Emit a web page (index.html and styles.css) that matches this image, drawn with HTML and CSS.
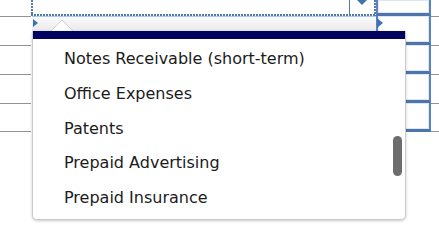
FILE: index.html
```html
<!DOCTYPE html>
<html lang="en">
<head>
    <meta charset="UTF-8">
    <title>Account picker</title>
    <link rel="stylesheet" href="styles.css">
</head>
<body>
    <div class="sheet">
        <div class="cell"></div>
        <div class="cell active">
            <span class="drop-btn">
                <svg width="10" height="5" viewBox="0 0 10 5"><polygon points="0,0 10,0 5,5" fill="#3f73b4"/></svg>
            </span>
        </div>
        <div class="cell sel"></div>
        <div class="cell"></div>

        <div class="cell line"></div>
        <div class="cell"></div>
        <div class="cell sel"></div>
        <div class="cell line"></div>

        <div class="cell line"></div>
        <div class="cell"></div>
        <div class="cell sel"></div>
        <div class="cell line"></div>

        <div class="cell line"></div>
        <div class="cell"></div>
        <div class="cell sel"></div>
        <div class="cell line"></div>

        <div class="cell line last"></div>
        <div class="cell"></div>
        <div class="cell sel"></div>
        <div class="cell line last"></div>
    </div>

    <div class="popup">
        <div class="pop-head">
            <span class="marker"></span>
            <svg class="caret" width="22" height="13" viewBox="0 0 22 13">
                <polyline points="0,13 11,2 22,13" fill="#fdfdfd" stroke="#cfcfcf" stroke-width="1"/>
            </svg>
        </div>
        <div class="list">
            <div class="item current">Notes Receivable (long-term)</div>
            <div class="item">Notes Receivable (short-term)</div>
            <div class="item">Office Expenses</div>
            <div class="item">Patents</div>
            <div class="item">Prepaid Advertising</div>
            <div class="item">Prepaid Insurance</div>
            <span class="thumb"></span>
        </div>
    </div>
    <span class="marker right-marker"></span>
</body>
</html>
```

FILE: styles.css
```css
html, body {
    margin: 0;
    width: 439px;
    height: 245px;
    overflow: hidden;
    background: #fff;
}

body {
    position: relative;
    font-family: "DejaVu Sans", Verdana, sans-serif;
}

.sheet {
    display: grid;
    grid-template-columns: 31px 345px 55px 1fr;
    grid-template-rows: 16px repeat(4, 29px);
}

.cell {
    box-sizing: border-box;
}

.line {
    border-top: 1px solid #929292;
}

.line.last {
    border-bottom: 1px solid #929292;
}

.sel {
    border-left: 2px solid #5d83bf;
    border-right: 2px solid #5d83bf;
    border-bottom: 3px solid #4e73ad;
    box-shadow: inset 0 0 0 1px #dce7f6;
}

.active {
    display: flex;
    justify-content: flex-end;
    padding-right: 2px;
    background:
        repeating-linear-gradient(180deg, #4e7cb2 0 2px, transparent 2px 3px) left top / 2px 100% no-repeat,
        repeating-linear-gradient(90deg, #4e7cb2 0 2px, transparent 2px 3px) left bottom / 100% 2px no-repeat,
        repeating-linear-gradient(180deg, #4e7cb2 0 2px, transparent 2px 3px) right top / 2px 100% no-repeat;
}

.drop-btn {
    display: flex;
    justify-content: center;
    align-items: flex-start;
    width: 24px;
    height: 14px;
    border-left: 1px solid #4f7db3;
}

.popup {
    position: absolute;
    left: 32px;
    top: 16px;
    width: 374px;
}

.pop-head {
    position: relative;
    box-sizing: border-box;
    width: 344px;
    height: 15px;
    border-top: 1px solid #b3cbea;
    background: linear-gradient(#fbfbfb, #e9e9e9);
}

.caret {
    position: absolute;
    left: 19px;
    bottom: 0;
}

.marker {
    position: absolute;
    left: 1px;
    top: 2px;
    width: 0;
    height: 0;
    border-top: 4px solid transparent;
    border-bottom: 4px solid transparent;
    border-left: 5px solid #3d72b8;
}

.right-marker {
    left: 377px;
    top: 18px;
    border-top-width: 5px;
    border-bottom-width: 5px;
    border-left-width: 6px;
}

.list {
    position: relative;
    box-sizing: border-box;
    height: 189px;
    overflow: hidden;
    background: #fff;
    border: 1px solid #cbcbcb;
    border-top: none;
    border-radius: 0 0 5px 5px;
    box-shadow: 0 1px 3px rgba(0, 0, 0, 0.22);
}

.item {
    height: 34.8px;
    line-height: 34.8px;
    padding-left: 31px;
    font-size: 16px;
    color: #1b1b1b;
    white-space: nowrap;
}

.item.current {
    margin-top: -26.8px;
    margin-bottom: 3px;
    line-height: 37.5px;
    background: #00005e;
    color: #fff;
}

.thumb {
    position: absolute;
    right: 3px;
    top: 105px;
    width: 9px;
    height: 40px;
    border-radius: 5px;
    background: #6d6d6d;
}
```
